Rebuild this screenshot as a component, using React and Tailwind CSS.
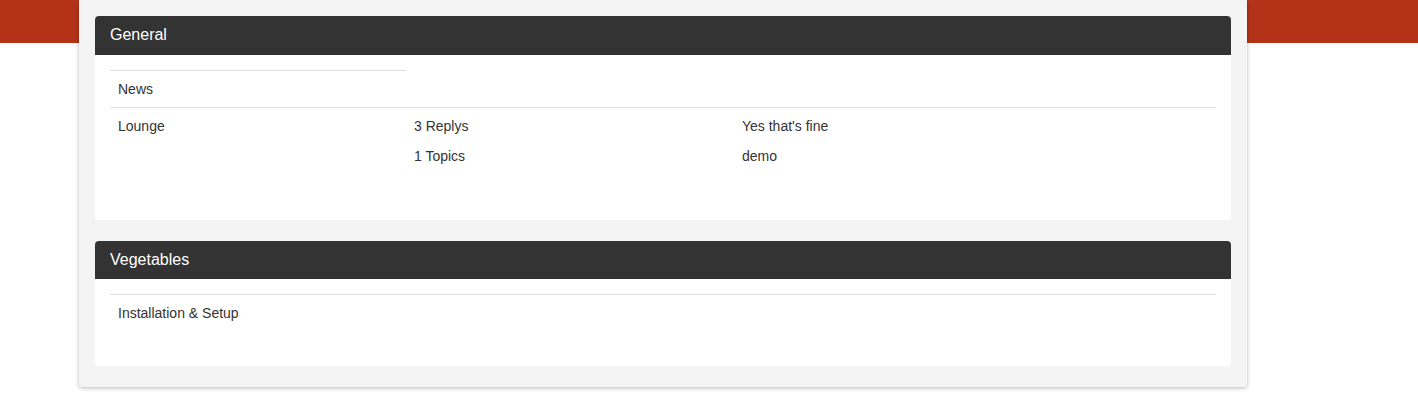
import React from "react";

const forums = [
    {
        title: "General",
        rows: [
            { name: "News" },
            { name: "Lounge", replies: "3 Replys", topics: "1 Topics", last: "Yes that's fine", by: "demo" }
        ]
    },
    {
        title: "Vegetables",
        rows: [{ name: "Installation & Setup", full: true }]
    }
];

const Row = ({ row }) => {
    if (!row.replies) {
        return (
            <div className={row.full ? "border-t border-[#dddddd]" : "grid grid-cols-[296px_1fr]"}>
                <div className={row.full ? "px-2 py-2 leading-5" : "border-t border-[#dddddd] px-2 py-2 leading-5"}>
                    {row.name}
                </div>
            </div>
        );
    }
    return (
        <div className="grid grid-cols-[296px_328px_1fr] border-t border-[#dddddd] pb-[9px]">
            <div className="px-2 pt-2 leading-5">{row.name}</div>
            <div className="px-2 pt-2 leading-5">
                <p className="mb-[10px]">{row.replies}</p>
                <p className="mb-[10px]">{row.topics}</p>
            </div>
            <div className="px-2 pt-2 leading-5">
                <p className="mb-[10px]">{row.last}</p>
                <p className="mb-[10px]">{row.by}</p>
            </div>
        </div>
    );
};

export default function App() {
    return (
        <div className="relative min-h-[417px] bg-white font-['Liberation_Sans',Arial,sans-serif] text-[14px] text-[#333333]">
            <div className="absolute left-0 right-0 top-0 h-[43px] bg-[#b43318]"></div>
            <div className="relative ml-[79px] w-[1168px] rounded-b-[3px] bg-[#f4f4f4] px-4 pb-[21px] pt-4 shadow-[0_1px_4px_rgba(0,0,0,0.28)]">
                {forums.map((forum, i) => (
                    <div key={forum.title} className={i === 0 ? "mb-[21px] rounded bg-white" : "rounded bg-white"}>
                        <div
                            className={
                                i === 0
                                    ? "flex h-[39px] items-center rounded-t bg-[#333333] px-[15px] pb-px text-[16px] text-white"
                                    : "flex h-[38px] items-center rounded-t bg-[#333333] px-[15px] text-[16px] text-white"
                            }
                        >
                            {forum.title}
                        </div>
                        <div className="px-[15px] pb-[35px] pt-[15px]">
                            {forum.rows.map((row) => (
                                <Row key={row.name} row={row} />
                            ))}
                        </div>
                    </div>
                ))}
            </div>
        </div>
    );
}
